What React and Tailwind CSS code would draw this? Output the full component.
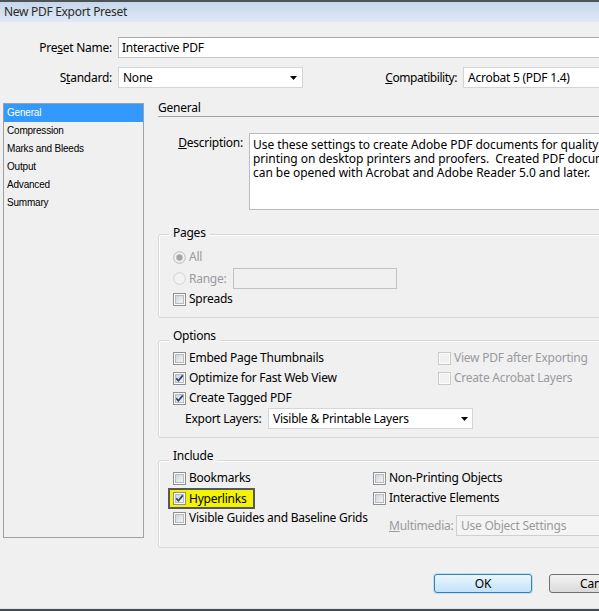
import React from 'react';

const Box = ({ checked, disabled }) => (
  <svg width="13" height="13" viewBox="0 0 13 13" className="shrink-0">
    <defs>
      <linearGradient id="cbg" x1="0" y1="0" x2="1" y2="1">
        <stop offset="0" stopColor="#cdd1d6" />
        <stop offset="1" stopColor="#f7f7f7" />
      </linearGradient>
    </defs>
    <rect x="0.5" y="0.5" width="12" height="12" fill="#fbfbfb" stroke={disabled ? '#cacaca' : '#8e8f8f'} />
    {!disabled && <rect x="2.5" y="2.5" width="8" height="8" fill="url(#cbg)" stroke="#b8bcc2" />}
    {disabled && <rect x="2" y="2" width="9" height="9" fill="#f1f1f1" />}
    {checked && (
      <path d="M3.2 6.3 L5.4 8.8 L9.8 3.4" fill="none" stroke="#2c3f78" strokeWidth="1.7" />
    )}
  </svg>
);

const Radio = ({ on }) => (
  <svg width="13" height="13" viewBox="0 0 13 13" className="shrink-0">
    <circle cx="6.5" cy="6.5" r="5.8" fill="#f3f3f3" stroke={on ? '#b9b9b9' : '#d2d2d2'} />
    {on && <circle cx="6.5" cy="6.5" r="3.2" fill="#a3a3a3" stroke="#c9c9c9" strokeWidth="0.8" />}
  </svg>
);

const Arrow = () => (
  <svg width="7" height="4" viewBox="0 0 7 4" className="shrink-0">
    <path d="M0 0 H7 L3.5 4 Z" fill="#000" />
  </svg>
);

const Check = ({ label, checked, disabled }) => (
  <div className="h-[20px] flex items-center gap-[3px]">
    <Box checked={checked} disabled={disabled} />
    <span className={disabled ? 'text-[#9a9aa0]' : ''}>{label}</span>
  </div>
);

const Group = ({ title, legendTop, className, children }) => (
  <div className={`relative border border-[#d5d9de] rounded-[3px] shadow-[inset_1px_1px_0_#ffffff] ${className}`}>
    <span className={`absolute left-[10px] ${legendTop} px-[4px] bg-[#f0f0f0] leading-[16px]`}>{title}</span>
    {children}
  </div>
);

const items = ['General', 'Compression', 'Marks and Bleeds', 'Output', 'Advanced', 'Summary'];

export default function App() {
  return (
    <div className="w-[599px] h-[611px] overflow-hidden bg-[#f0f0f0] flex flex-col font-['Noto_Sans',sans-serif] text-[12px] leading-[16px] text-black tracking-[-0.25px]">
      <div className="h-[22px] shrink-0 border-t-2 border-[#4e5357] bg-linear-to-b from-[#c7d7ea] to-[#dfe9f5] flex items-center pl-[4px] text-[#2b2b2b] text-[12px] tracking-[-0.3px]">
        New PDF Export Preset
      </div>

      <div className="w-[700px] flex flex-col">
        <div className="mt-[15px] h-[21px] flex items-center">
          <div className="w-[112px] text-right">
            Pre<span className="underline">s</span>et Name:
          </div>
          <div className="ml-[6px] w-[540px] h-[21px] bg-white border border-[#c3c5c9] border-t-[#a5a7ab] flex items-center pl-[3px]">
            Interactive PDF
          </div>
        </div>

        <div className="mt-[9px] h-[21px] flex items-center">
          <div className="w-[112px] text-right">
            S<span className="underline">t</span>andard:
          </div>
          <div className="ml-[6px] w-[185px] h-[21px] bg-white border border-[#d4d5d8] flex items-center justify-between pl-[4px] pr-[5px]">
            <span>None</span>
            <Arrow />
          </div>
          <div className="w-[154px] text-right tracking-[-0.45px]">
            <span className="underline">C</span>ompatibility:
          </div>
          <div className="ml-[6px] w-[200px] h-[21px] bg-white border border-[#d4d5d8] flex items-center pl-[4px]">
            Acrobat 5 (PDF 1.4)
          </div>
        </div>

        <div className="mt-[12px] flex">
          <div className="ml-[3px] mt-[3px] w-[141px] h-[435px] border border-[#9da0a6] bg-[#f0f0f0] font-['Liberation_Sans',sans-serif] text-[10px] tracking-[-0.2px]">
            {items.map((it, i) => (
              <div
                key={it}
                className={`h-[18px] leading-[18px] pl-[3px] ${i === 0 ? 'bg-[#3399ff] text-white' : 'text-black'}`}
              >
                {it}
              </div>
            ))}
          </div>

          <div className="ml-[14px] w-[540px] flex flex-col">
            <div className="h-[17px] border-b border-[#a3a3a3]">General</div>

            <div className="mt-[16px] flex">
              <div className="w-[85px] text-right mt-[2px]">
                <span className="underline">D</span>escription:
              </div>
              <div className="ml-[6px] w-[420px] h-[77px] bg-white border border-[#b9bbbf] pt-[4px] pl-[3px] leading-[14px] whitespace-nowrap tracking-[-0.05px]">
                <div>Use these settings to create Adobe PDF documents for quality</div>
                <div>printing on desktop printers and proofers.&nbsp; Created PDF documents</div>
                <div>can be opened with Acrobat and Adobe Reader 5.0 and later.</div>
              </div>
            </div>

            <Group title="Pages" legendTop="-top-[10px]" className="mt-[24px] h-[84px] pt-[12px] pl-[14px]">
              <div className="h-[20px] flex items-center gap-[3px] text-[#9a9aa0]">
                <Radio on />
                <span>All</span>
              </div>
              <div className="mt-[1px] h-[21px] flex items-center text-[#9a9aa0]">
                <Radio />
                <span className="ml-[3px] w-[44px]">Range:</span>
                <div className="w-[164px] h-[21px] border border-[#c2c2c2] bg-[#f0f0f0]" />
              </div>
              <Check label="Spreads" />
            </Group>

            <Group title="Options" legendTop="-top-[13px]" className="mt-[22px] h-[98px] pt-[7px] pl-[14px]">
              <div className="flex">
                <div className="w-[265px]">
                  <Check label="Embed Page Thumbnails" />
                  <Check label="Optimize for Fast Web View" checked />
                  <Check label="Create Tagged PDF" checked />
                </div>
                <div>
                  <Check label="View PDF after Exporting" disabled />
                  <Check label="Create Acrobat Layers" disabled />
                </div>
              </div>
              <div className="h-[21px] flex items-center pl-[12px]">
                <span className="w-[83px]">Export Layers:</span>
                <div className="w-[205px] h-[21px] bg-white border border-[#d4d5d8] flex items-center justify-between pl-[4px] pr-[4px]">
                  <span>Visible &amp; Printable Layers</span>
                  <Arrow />
                </div>
              </div>
            </Group>

            <Group title="Include" legendTop="-top-[13px]" className="mt-[22px] h-[88px] pt-[7px] pl-[14px]">
              <div className="flex">
                <div className="w-[200px]">
                  <Check label="Bookmarks" />
                  <div className="h-[20px] flex items-start">
                    <div className="-ml-[5px] h-[21px] border-2 border-[#555759] bg-[#f4f400] flex items-center gap-[3px] pl-[3px] pr-[7px]">
                      <Box checked />
                      <span>Hyperlinks</span>
                    </div>
                  </div>
                  <Check label="Visible Guides and Baseline Grids" />
                </div>
                <div>
                  <Check label="Non-Printing Objects" />
                  <Check label="Interactive Elements" />
                  <div className="mt-[7px] h-[21px] flex items-center pl-[16px]">
                    <span className="w-[67px] text-[#9a9aa0]">
                      <span className="underline">M</span>ultimedia:
                    </span>
                    <div className="w-[200px] h-[21px] bg-[#f4f4f4] border border-[#cfcfcf] flex items-center pl-[4px] text-[#9a9aa0]">
                      Use Object Settings
                    </div>
                  </div>
                </div>
              </div>
            </Group>
          </div>
        </div>

        <div className="mt-[26px] flex">
          <button className="ml-[434px] w-[98px] h-[19px] rounded-[3px] border border-[#3c7fb1] bg-linear-to-b from-[#eaf6fd] to-[#c2e3f7] shadow-[0_0_0_1px_#b9e0f5] leading-[16px]">
            OK
          </button>
          <button className="ml-[17px] w-[98px] h-[19px] rounded-[3px] border border-[#707070] bg-linear-to-b from-[#f3f3f3] to-[#dadada] leading-[16px]">
            Cancel
          </button>
        </div>
      </div>

      <div className="mt-auto h-[3px] shrink-0 border-t border-[#dbe5f1] bg-[#454b50]" />
    </div>
  );
}
